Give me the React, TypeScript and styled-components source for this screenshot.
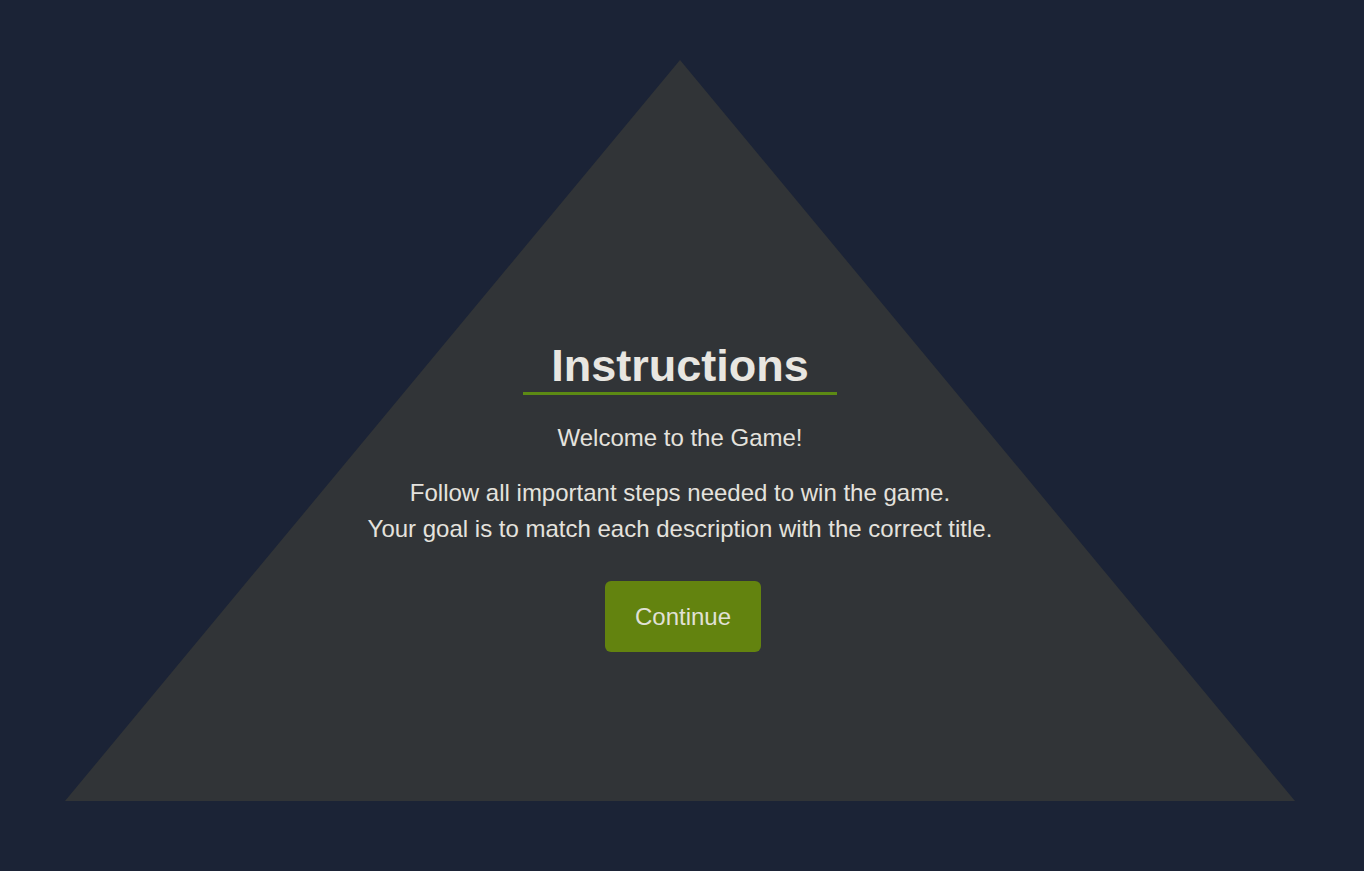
import React from 'react';
import styled, { createGlobalStyle } from 'styled-components';

const GlobalStyle = createGlobalStyle`
    html, body {
        margin: 0;
        padding: 0;
        background: #1b2336;
    }
    body {
        font-family: "Liberation Sans", Arial, sans-serif;
        color: #e6e4df;
    }
`

const Page = styled.main`
    width: 1364px;
    height: 871px;
    overflow: hidden;
    background: #1b2336;
`

const Stage = styled.section`
    width: 1230px;
    height: 741px;
    margin: 60px 0 0 65px;
    background: #313437;
    clip-path: polygon(50% 0, 100% 100%, 0 100%);
    display: flex;
    flex-direction: column;
    align-items: center;
    padding-top: 280px;
    box-sizing: border-box;
`

const Title = styled.h1`
    margin: 0;
    padding: 0 28px;
    font-size: 45px;
    line-height: 52px;
    font-weight: bold;
    color: #e8e6e1;
    border-bottom: 3px solid #5c8a14;
`

const Text = styled.p<{ $gap: number }>`
    margin: ${p => p.$gap}px 0 0;
    font-size: 24px;
    line-height: 36px;
    text-align: center;
    color: #e4e2dd;
`

const Button = styled.button`
    margin: 34px 0 0 6px;
    width: 156px;
    height: 71px;
    border: none;
    border-radius: 6px;
    background: #63830f;
    color: #e0e1d6;
    font-family: "Liberation Sans", Arial, sans-serif;
    font-size: 24px;
    cursor: pointer;
`

export default function App() {
    return (
        <Page>
            <GlobalStyle />
            <Stage>
                <Title>Instructions</Title>
                <Text $gap={25}>Welcome to the Game!</Text>
                <Text $gap={19}>
                    Follow all important steps needed to win the game.<br />
                    Your goal is to match each description with the correct title.
                </Text>
                <Button>Continue</Button>
            </Stage>
        </Page>
    );
}
